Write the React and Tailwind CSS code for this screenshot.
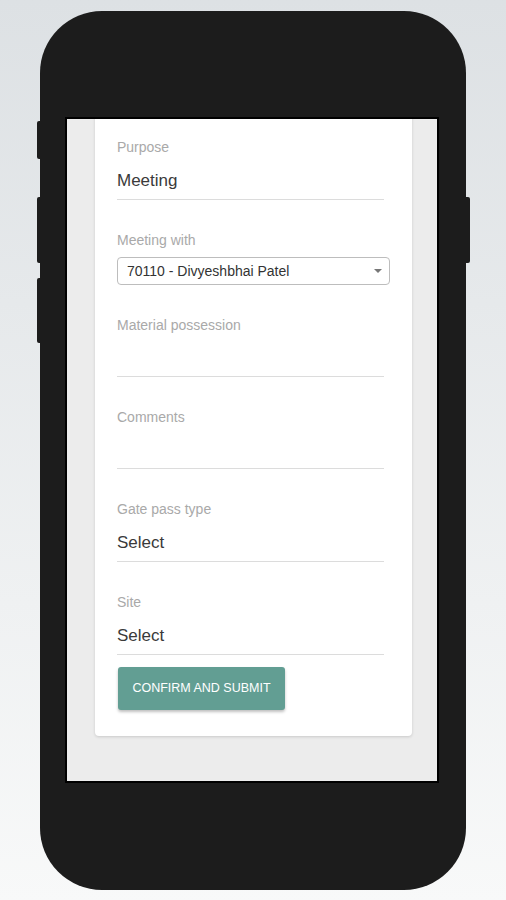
import React from "react";

const font = { fontFamily: '"Liberation Sans", Arial, sans-serif' };

function Field({ label, value, empty }) {
  return (
    <div className="flex flex-col">
      <div className="h-5 text-[14px] leading-5 text-[#a9a9a9]">{label}</div>
      <div className={empty ? "mt-3 h-[23px]" : "mt-3 h-6 text-[17px] leading-6 text-[#3a3a3a]"}>{value}</div>
      <div className="mt-[6px] h-px w-[267px] bg-[#dcdcdc]" />
    </div>
  );
}

export default function App() {
  return (
    <div
      className="relative h-[900px] w-[506px] overflow-hidden bg-gradient-to-b from-[#dde1e4] to-[#f8f9f9] pl-[40px] pt-[11px]"
      style={font}
    >
      <div className="relative h-[879px] w-[426px] rounded-[62px] bg-[#1c1c1c] pl-[25px] pt-[106px]">
        {/* side buttons */}
        <div className="absolute left-[-3px] top-[110px] h-[38px] w-[4px] rounded-l-[2px] bg-[#1c1c1c]" />
        <div className="absolute left-[-3px] top-[186px] h-[66px] w-[4px] rounded-l-[2px] bg-[#1c1c1c]" />
        <div className="absolute left-[-3px] top-[267px] h-[65px] w-[4px] rounded-l-[2px] bg-[#1c1c1c]" />
        <div className="absolute right-[-4px] top-[186px] h-[66px] w-[5px] rounded-r-[2px] bg-[#1c1c1c]" />

        <div className="h-[666px] w-[374px] overflow-hidden border-2 border-black bg-[#ececec] pl-[28px]">
          <div className="-mt-4 flex h-[633px] w-[317px] flex-col gap-[30px] rounded-b-[4px] bg-white pl-[22px] pt-[34px] shadow-[0_1px_3px_rgba(0,0,0,0.15)]">
            <Field label="Purpose" value="Meeting" />
            <div className="flex flex-col">
              <div className="h-5 text-[14px] leading-5 text-[#a9a9a9]">Meeting with</div>
              <div className="mt-[7px] flex h-[28px] w-[273px] items-center justify-between rounded-[4px] border border-[#bdbdbd] pl-[9px] pr-[6px] text-[14px] text-[#333]">
                <span>70110 - Divyeshbhai Patel</span>
                <svg width="10" height="6" viewBox="0 0 10 6">
                  <path d="M1 1 L9 1 L5 5 Z" fill="#777" />
                </svg>
              </div>
            </div>
            <Field label="Material possession" value="" empty />
            <Field label="Comments" value="" empty />
            <Field label="Gate pass type" value="Select" />
            <div className="flex flex-col">
              <Field label="Site" value="Select" />
              <button className="mt-3 ml-px flex h-[43px] w-[167px] items-center justify-center rounded-[3px] bg-[#629e93] text-[12.5px] uppercase text-white shadow-[0_2px_3px_rgba(0,0,0,0.25)]">
                Confirm and submit
              </button>
            </div>
          </div>
        </div>
      </div>
    </div>
  );
}
